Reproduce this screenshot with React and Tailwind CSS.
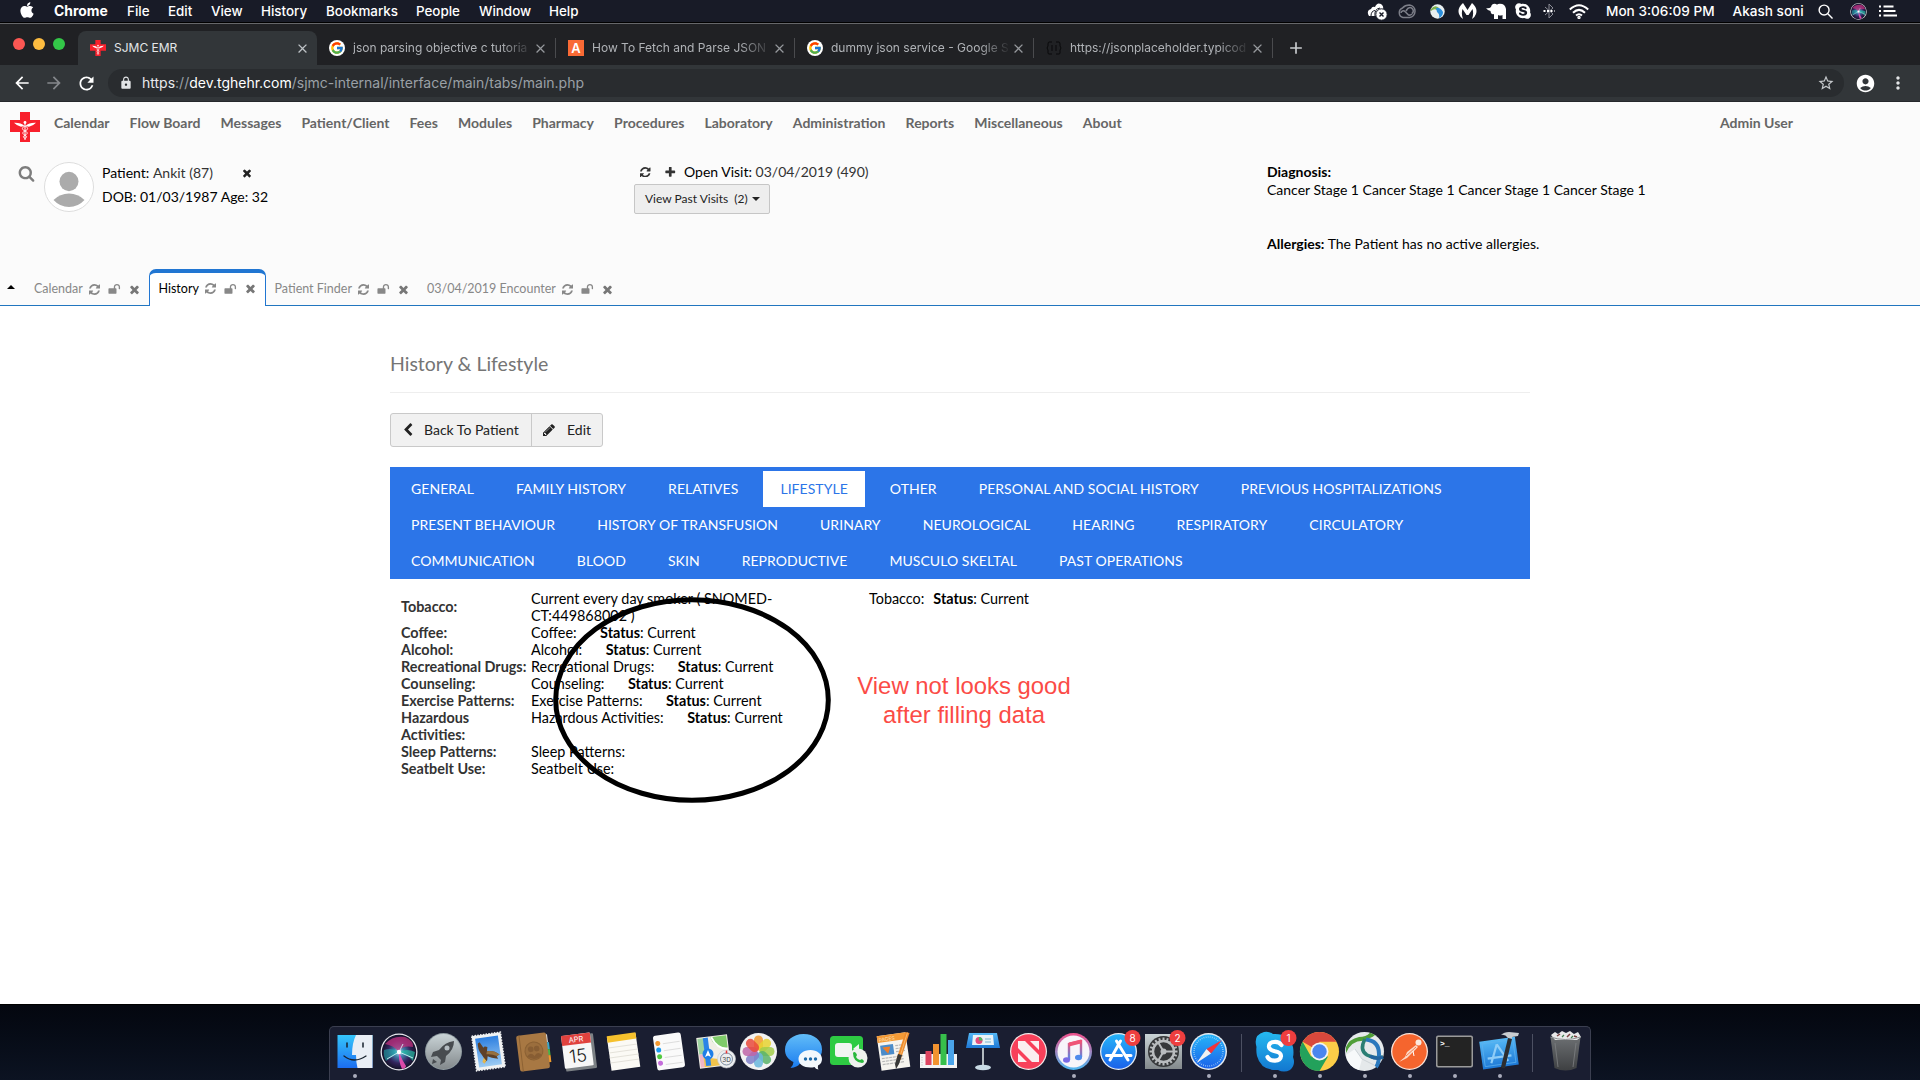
import React from "react";
import { FaApple, FaSkype } from "react-icons/fa";
import { FcGoogle } from "react-icons/fc";
import { MdAccountCircle, MdArrowBack, MdArrowForward, MdRefresh, MdLock, MdStarBorder, MdMoreVert, MdClose, MdAdd } from "react-icons/md";

const glyphs = {
  times: ["0 0 1792 1792", "M1490 1322q0 40-28 68l-136 136q-28 28-68 28t-68-28l-294-294-294 294q-28 28-68 28t-68-28l-136-136q-28-28-28-68t28-68l294-294-294-294q-28-28-28-68t28-68l136-136q28-28 68-28t68 28l294 294 294-294q28-28 68-28t68 28l136 136q28 28 28 68t-28 68l-294 294 294 294q28 28 28 68z"],
  refresh: ["0 0 1536 1536", "M1511 928q0 5-1 7-64 268-268 434.5t-478 166.5q-146 0-282.5-55t-243.5-157l-129 129q-19 19-45 19t-45-19-19-45v-448q0-26 19-45t45-19h448q26 0 45 19t19 45-19 45l-137 137q71 66 161 102t187 36q134 0 250-65t186-179q11-17 53-117 8-23 30-23h192q13 0 22.5 9.5t9.5 22.5zm25-800v448q0 26-19 45t-45 19h-448q-26 0-45-19t-19-45 19-45l138-138q-148-137-349-137-134 0-250 65t-186 179q-11 17-53 117-8 23-30 23h-199q-13 0-22.5-9.5t-9.5-22.5v-7q65-268 270-434.5t480-166.5q146 0 284 55.5t245 156.5l130-129q19-19 45-19t45 19 19 45z"],
  unlock: ["0 0 1792 1792", "M1728 576v256q0 26-19 45t-45 19h-64q-26 0-45-19t-19-45v-256q0-106-75-181t-181-75-181 75-75 181v192h96q40 0 68 28t28 68v576q0 40-28 68t-68 28h-960q-40 0-68-28t-28-68v-576q0-40 28-68t68-28h672v-192q0-185 131.5-316.5t316.5-131.5 316.5 131.5 131.5 316.5z"],
  plus: ["0 0 1792 1792", "M1600 736v192q0 40-28 68t-68 28h-416v416q0 40-28 68t-68 28h-192q-40 0-68-28t-28-68v-416h-416q-40 0-68-28t-28-68v-192q0-40 28-68t68-28h416v-416q0-40 28-68t68-28h192q40 0 68 28t28 68v416h416q40 0 68 28t28 68z"],
  search: ["0 128 1792 1792", "M1216 832q0-185-131.5-316.5t-316.5-131.5-316.5 131.5-131.5 316.5 131.5 316.5 316.5 131.5 316.5-131.5 131.5-316.5zm512 832q0 52-38 90t-90 38q-54 0-90-38l-343-342q-179 124-399 124-143 0-273.5-55.5t-225-150-150-225-55.5-273.5 55.5-273.5 150-225 225-150 273.5-55.5 273.5 55.5 225 150 150 225 55.5 273.5q0 220-124 399l343 343q37 37 37 90z"],
  pencil: ["0 0 1792 1792", "M491 1536l91-91-235-235-91 91v107h128v128h107zm523-928q0-22-22-22-10 0-17 7l-542 542q-7 7-7 17 0 22 22 22 10 0 17-7l542-542q7-7 7-17zm-54-192l416 416-832 832h-416v-416zm683 96q0 53-37 90l-166 166-416-416 166-165q36-38 90-38 53 0 91 38l235 234q37 39 37 91z"],
  back: ["0 0 1792 1792", "M1427 301l-531 531 531 531q19 19 19 45t-19 45l-166 166q-19 19-45 19t-45-19l-742-742q-19-19-19-45t19-45l742-742q19-19 45-19t45 19l166 166q19 19 19 45t-19 45z"],
};

function Glyph({ name, className }) {
  return (
    <svg viewBox={glyphs[name][0]} className={`shrink-0 fill-current ${className}`}>
      <path d={glyphs[name][1]} />
    </svg>
  );
}

function CrossLogo({ className }) {
  return (
    <svg viewBox="0 0 30 30" className={`shrink-0 ${className}`}>
      <path d="M10 0h10v8h10v12H20v10H10V20H0V8h10z" fill="#f8202c" />
      <path d="M15 10v18" stroke="#fff" strokeWidth="1" />
      <path d="M14.500 14Q11 10.500 4 10.800Q7 14 11 14.800ZM15.500 14Q19 10.500 26 10.800Q23 14 19 14.800Z" fill="#fff" />
      <path d="M15 14c-3.500 1.500-3.500 3.500 0 5s2.500 3 0 4.200-1.800 2.300 0 3.300M15 14c3.500 1.500 3.500 3.500 0 5s-2.500 3 0 4.200 1.800 2.300 0 3.300" stroke="#fff" strokeWidth=".9" fill="none" />
      <circle cx="15" cy="10.500" r="1.400" fill="#fff" />
    </svg>
  );
}

/* ---------- menu bar ---------- */
const SiriOrb = ({ className, id }) => (
  <svg viewBox="0 0 38 38" className={className}>
    <defs>
      <radialGradient id={`${id}a`} cx="50%" cy="50%" r="50%">
        <stop offset="0" stopColor="#b7e8f4" /><stop offset=".3" stopColor="#3f7fa8" /><stop offset=".65" stopColor="#33245e" /><stop offset="1" stopColor="#141228" />
      </radialGradient>
    </defs>
    <circle cx="19" cy="19" r="18.500" fill="#e8e8ee" />
    <circle cx="19" cy="19" r="17.200" fill={`url(#${id}a)`} />
    <path d="M5 11Q13 2 25 4Q34 8 33 14Q22 12 19 19Q13 12 5 11Z" fill="#c2307d" opacity=".75" />
    <path d="M4 17Q12 14 19 19Q12 24 6 28Q3 23 4 17Z" fill="#1fb7b0" opacity=".55" />
    <path d="M35 19Q27 15 19 19Q28 22 33 28Z" fill="#25c8a8" opacity=".65" />
    <path d="M19 19Q18 27 22 36Q26 35 26 33Q22 27 19 19Z" fill="#f04fb4" opacity=".9" />
    <path d="M19 19L7 26M19 19L33 25M19 19L23 11" stroke="#d5f7fb" strokeWidth="1" opacity=".85" />
    <circle cx="19" cy="19" r="2.200" fill="#fff" />
  </svg>
);

function MenuBar() {
  return (
    <header className="flex h-[23px] items-center border-b border-black bg-[#181b27] font-['Inter',sans-serif] text-[13.4px] font-medium text-white">
      <FaApple className="mb-[3px] ml-[19px] h-[18px] w-[16px]" />
      <nav className="ml-[19px] flex items-center whitespace-nowrap">
        <span className="w-[73px] text-[13.9px] font-bold">Chrome</span>
        <span className="w-[41px]">File</span>
        <span className="w-[43px]">Edit</span>
        <span className="w-[50px]">View</span>
        <span className="w-[65px]">History</span>
        <span className="w-[90px]">Bookmarks</span>
        <span className="w-[63px]">People</span>
        <span className="w-[70px]">Window</span>
        <span>Help</span>
      </nav>
      <div className="ml-auto flex h-full items-center pr-[23px]">
        <span className="flex w-[31px] justify-center">
          <svg viewBox="0 0 21 19" className="h-[19px] w-[21px]">
            <path d="M1 12Q0 8 4 7Q5 4 8 5Q10 0 14 2Q17 4 16 8L10 14H2Z" fill="#fff" />
            <path d="M4 14Q4 9 8 8.500M8 14Q7 7 13 6" stroke="#181b27" fill="none" />
            <circle cx="14.500" cy="12.500" r="5.700" fill="#fff" stroke="#181b27" strokeWidth="1" />
            <path d="M12.500 10.500l4 4m0-4l-4 4" stroke="#181b27" strokeWidth="1.400" />
          </svg>
        </span>
        <span className="flex w-[27px] justify-center">
          <svg viewBox="0 0 20 15" className="h-[15px] w-[20px]" fill="none" stroke="#7c7e88">
            <path d="M6 13.500a5 5 0 0 1-.5-9.500Q8 1 12.500 1a6.300 6.300 0 0 1 0 12.500Z" strokeWidth="1.500" />
            <path d="M15 9.500a3.300 3.300 0 1 0-5-4l-1 1.500M4 9a2.300 2.300 0 0 1 4-1.500l3.500 3.500q2 .5 3.500-1" strokeWidth="1.600" />
          </svg>
        </span>
        <span className="flex w-[34px] justify-center">
          <svg viewBox="0 0 15 15" className="size-[15px]">
            <circle cx="7.500" cy="7.500" r="7.200" fill="#e9eff0" />
            <path d="M1 5Q5 0 9 4L7 6Q4 4 1 7Z" fill="#7fb24d" />
            <path d="M6 4Q10 3 13 8Q13 12 9 14Q10 10 7 8Z" fill="#2c8fdc" />
          </svg>
        </span>
        <span className="flex w-[27px] justify-center">
          <svg viewBox="0 0 19 16" className="h-[16px] w-[19px]">
            <path d="M5 0L9.500 7L14 0Q20 5 18 11Q17 14 14 16Q16 11 14.500 6L10.500 12H8.500L4.500 6Q3 11 5 16Q2 14 1 11Q-1 5 5 0Z" fill="#fff" />
          </svg>
        </span>
        <span className="flex w-[31px] justify-center">
          <svg viewBox="0 0 21 16" className="h-[16px] w-[21px]">
            <path d="M0 5Q3 6 5 4Q6 0 10 1Q11 2 12 1Q19 0 20 6V16H16.500V12Q14 13 12 12V16H8V11Q5 12 4.500 8Q2 8 0 5Z" fill="#fff" />
          </svg>
        </span>
        <span className="flex w-[22px] justify-center"><FaSkype className="size-[18px]" /></span>
        <span className="flex w-[29px] justify-center text-[#8b8d96]">
          <svg viewBox="0 0 12 16" className="h-[16px] w-[12px]" fill="none" stroke="currentColor">
            <path d="M2 4l8 7-4 4V1l4 4-8 7" />
            <path d="M.500 8h11" stroke="#fff" strokeWidth="2" strokeDasharray="2 1.500" />
          </svg>
        </span>
        <span className="flex w-[31px] justify-center">
          <svg viewBox="0 0 20 15" className="h-[15px] w-[20px]" fill="none" stroke="#fff" strokeWidth="2">
            <path d="M.800 5.500Q10-3 19.200 5.500M4 8.700Q10 3 16 8.700M7 11.500Q10 9 13 11.500" />
            <circle cx="10" cy="13.400" r=".7" />
          </svg>
        </span>
        <span className="ml-[12px] w-[126.5px] whitespace-nowrap text-[13.6px]">Mon 3:06:09 PM</span>
        <span className="w-[85.5px] whitespace-nowrap text-[13.6px]">Akash soni</span>
        <svg viewBox="0 0 16 16" className="size-[15px]" fill="none" stroke="#fff" strokeWidth="1.500"><circle cx="6.500" cy="6.500" r="5.300" /><path d="M10.500 10.500l5 5" /></svg>
        <SiriOrb id="menuSiri" className="ml-[17px] size-[17px]" />
        <svg viewBox="0 0 18 12" className="ml-[12px] h-[12px] w-[18px]" fill="none" stroke="#fff" strokeWidth="2"><path d="M0 1.500h2M4.500 1.500h10M0 6h2M4.500 6h12M0 10.500h2M4.500 10.500h13.500" /></svg>
      </div>
    </header>
  );
}

/* ---------- browser chrome ---------- */
function Favicon({ kind }) {
  if (kind === "emr") return <CrossLogo className="size-[16px]" />;
  if (kind === "google")
    return (
      <span className="flex size-[16px] shrink-0 items-center justify-center rounded-full bg-white">
        <FcGoogle className="size-[14px]" />
      </span>
    );
  if (kind === "app")
    return <span className="flex size-[16px] shrink-0 items-center justify-center bg-[#f96a35] text-[13px] leading-[16px] font-semibold text-white">A</span>;
  return (
    <svg viewBox="0 0 16 16" className="size-[16px] shrink-0" fill="none" stroke="#08090a"><path d="M6 2H3q-1 0-1 2v2l-1 2 1 2v3q0 1 1 1h3M10 2h3q1 0 1 2v2l1 2-1 2v3q0 1-1 1h-3M6 5v6M10 5v6" /></svg>
  );
}

const tabs = [
  { kind: "google", title: "json parsing objective c tutoria" },
  { kind: "app", title: "How To Fetch and Parse JSON" },
  { kind: "google", title: "dummy json service - Google S" },
  { kind: "json", title: "https://jsonplaceholder.typicod" },
];

function TabStrip() {
  return (
    <div className="flex h-[42px] border-t border-[#66676a] bg-[#202124] pl-[13px] font-['Inter',sans-serif] text-[12px]">
      <div className="flex w-[65px] items-start gap-[8px] pt-[14px]">
        <span className="size-[12px] rounded-full bg-[#fc5753]" />
        <span className="size-[12px] rounded-full bg-[#fdbc40]" />
        <span className="size-[12px] rounded-full bg-[#33c748]" />
      </div>
      <div className="mt-[7px] flex w-[239px] items-center rounded-t-[8px] bg-[#323639] pr-[7px] pl-[12px] text-[#e4e6e8]">
        <Favicon kind="emr" />
        <span className="ml-[8px] flex-1 text-[12px]">SJMC EMR</span>
        <MdClose className="size-[15px] text-[#bfc3c7]" />
      </div>
      {tabs.map((t) => (
        <div key={t.title} className="mt-[14px] mb-[7px] flex w-[239px] items-center border-r border-[#4a4b4e] pr-[7px] pl-[12px] text-[#b0b3b7]">
          <Favicon kind={t.kind} />
          <span className="ml-[8px] w-[180px] whitespace-nowrap [mask-image:linear-gradient(to_right,black_148px,transparent_180px)]">{t.title}</span>
          <MdClose className="size-[15px] shrink-0 text-[#96999d]" />
        </div>
      ))}
      <MdAdd className="mt-[14px] ml-[13px] size-[20px] text-[#c8cbce]" />
    </div>
  );
}

function Toolbar() {
  return (
    <div className="flex h-[37px] items-center border-b border-[#25282b] bg-[#323639] pl-[12px] text-white">
      <MdArrowBack className="size-[20px]" />
      <MdArrowForward className="ml-[12px] size-[20px] text-[#85888c]" />
      <MdRefresh className="ml-[12px] size-[21px]" />
      <div className="ml-[11px] flex h-[28px] w-[1736px] items-center rounded-full bg-[#292c2f] pr-[9px] pl-[11px]">
        <MdLock className="size-[14px] text-[#e2e4e6]" />
        <p className="mb-[2px] ml-[9px] flex-1 font-['Inter',sans-serif] text-[14px] text-[#9aa0a6]">
          <span className="text-[#e8eaed]">https</span>://<span className="text-white">dev.tghehr.com</span>/sjmc-internal/interface/main/tabs/main.php
        </p>
        <MdStarBorder className="size-[18px] text-[#c6c9cc]" />
      </div>
      <MdAccountCircle className="ml-[11px] size-[21px]" />
      <MdMoreVert className="ml-[12px] size-[20px] text-[#e4e6e8]" />
    </div>
  );
}

/* ---------- EMR page ---------- */
const mainMenu = ["Calendar", "Flow Board", "Messages", "Patient/Client", "Fees", "Modules", "Pharmacy", "Procedures", "Laboratory", "Administration", "Reports", "Miscellaneous", "About"];

function EmrTab({ label, active, className }) {
  return (
    <div className={`flex items-center text-[12.5px] ${active ? "h-[37px] rounded-t-[7px] border-x border-t-4 border-[#2176d2] bg-white pb-px text-black" : "h-[36px] pt-[5px] text-[#888]"} ${className}`}>
      <span className="whitespace-nowrap">{label}</span>
      <Glyph name="refresh" className="ml-[6.5px] size-[11px] text-[#888]" />
      <Glyph name="unlock" className="ml-[8px] size-[12.5px] text-[#888]" />
      <Glyph name="times" className="ml-[7px] size-[13px] text-[#777]" />
    </div>
  );
}

function EmrHeader() {
  return (
    <section className="flex h-[204px] flex-col border-b border-[#2176bf] bg-[#fbfbfb]">
      <div className="flex h-[50px] items-start">
        <CrossLogo className="mt-[10px] ml-[10px] size-[30px]" />
        <nav className="mt-[10.5px] ml-[14px] flex flex-1 gap-[20.1px] text-[14px] leading-[20px] font-bold text-[#666]">
          {mainMenu.map((m) => <span key={m}>{m}</span>)}
        </nav>
        <span className="mt-[10.5px] w-[200px] text-[14px] leading-[20px] font-bold text-[#666]">Admin User</span>
      </div>
      <div className="flex h-[104px] items-start pl-[18px] text-[14px]">
        <Glyph name="search" className="mt-[14px] size-[17px] text-[#7d7d7d]" />
        <svg viewBox="0 0 50 50" className="mt-[10px] ml-[9px] size-[50px]">
          <circle cx="25" cy="25" r="24.500" fill="#fff" stroke="#ddd" />
          <ellipse cx="25" cy="19.500" rx="9.500" ry="9.700" fill="#ababab" />
          <path d="M9.500 38Q16 31.500 25 31.500T40.500 38Q34 45 25 45T9.500 38Z" fill="#ababab" />
        </svg>
        <div className="mt-[9px] ml-[8px] w-[532px] leading-[24px]">
          <p className="flex items-center whitespace-pre">Patient: <span className="text-[#333]">Ankit (87)</span><Glyph name="times" className="ml-[28px] size-[12px] text-[#222]" /></p>
          <p>DOB: 01/03/1987 Age: 32</p>
        </div>
        <div className="mt-[10px] w-[633px]">
          <p className="flex items-center leading-[20px] whitespace-pre">
            <Glyph name="refresh" className="ml-[6px] size-[10.500px] text-[#333]" />
            <Glyph name="plus" className="mr-[8px] ml-[13px] size-[12.5px] text-[#333]" />
            Open Visit: <span className="text-[#333]">03/04/2019 (490)</span>
          </p>
          <div className="mt-[2px] flex h-[30px] w-[136px] items-center rounded-[2px] border border-[#c6c6c6] bg-[#eee] pl-[10px] text-[12px] whitespace-pre text-[#222]">
            View Past Visits  (2)<span className="mt-px ml-[4px] border-x-4 border-t-4 border-x-transparent border-t-[#222]" />
          </div>
        </div>
        <div className="mt-[11px] leading-[18px]">
          <p className="font-bold">Diagnosis:</p>
          <p>Cancer Stage 1 Cancer Stage 1 Cancer Stage 1 Cancer Stage 1</p>
          <p className="mt-[36px]"><b>Allergies:</b> The Patient has no active allergies.</p>
        </div>
      </div>
      <div className="flex h-[50px] items-end">
        <span className="mr-[10px] mb-[16px] ml-[7px] h-0 w-0 border-x-4 border-b-4 border-x-transparent border-b-black" />
        <EmrTab label="Calendar" className="w-[124px] pl-[9px]" />
        <EmrTab label="History" active className="mb-[-1px] w-[117px] pl-[8.5px]" />
        <EmrTab label="Patient Finder" className="w-[152px] pl-[8.5px]" />
        <EmrTab label="03/04/2019 Encounter" className="pl-[9px]" />
      </div>
    </section>
  );
}

const sections = [
  ["GENERAL", "FAMILY HISTORY", "RELATIVES", "LIFESTYLE", "OTHER", "PERSONAL AND SOCIAL HISTORY", "PREVIOUS HOSPITALIZATIONS"],
  ["PRESENT BEHAVIOUR", "HISTORY OF TRANSFUSION", "URINARY", "NEUROLOGICAL", "HEARING", "RESPIRATORY", "CIRCULATORY"],
  ["COMMUNICATION", "BLOOD", "SKIN", "REPRODUCTIVE", "MUSCULO SKELTAL", "PAST OPERATIONS"],
];

const rows = [
  ["Coffee:", true], ["Alcohol:", true], ["Recreational Drugs:", true], ["Counseling:", true], ["Exercise Patterns:", true],
  ["Hazardous Activities:", true], ["Sleep Patterns:", false], ["Seatbelt Use:", false],
];

function History() {
  return (
    <main className="relative h-[698px] bg-white pl-[390px]">
      <div className="w-[1140px]">
        <h1 className="flex h-[87px] items-end border-b border-[#eee] pb-[16px] text-[19.5px] leading-[24px] text-[#757575]">History &amp; Lifestyle</h1>
        <div className="mt-[20px] flex h-[34px] w-[213px] overflow-hidden rounded-[3px] border border-[#c9c9c9] bg-[#f1f1f1] text-[14px] text-[#222]">
          <span className="flex w-[141px] items-center border-r border-[#c9c9c9] pb-[2px] pl-[10px]"><Glyph name="back" className="mt-px mr-[9px] size-[14px]" />Back To Patient</span>
          <span className="flex items-center pb-[2px] pl-[10px]"><Glyph name="pencil" className="mt-px mr-[11px] size-[14px]" />Edit</span>
        </div>
        <div className="mt-[20px] h-[112px] bg-[#2c75e8] pt-[4px] text-[14px] tracking-[0.05px] text-white">
          {sections.map((line, i) => (
            <div key={i} className="flex h-[36px]">
              {line.map((s) => (
                <span key={s} className={`mx-[3.500px] flex items-center px-[17.500px] pb-[2px] ${s === "LIFESTYLE" ? "bg-white text-[#2c75e8]" : ""}`}>{s}</span>
              ))}
            </div>
          ))}
        </div>
        <div className="mt-[11px] ml-[11px] grid w-[1100px] grid-cols-[130px_338px_1fr] text-[14.400px] leading-[17px] text-black">
          <b className="self-center pb-px text-[#333]">Tobacco:</b>
          <span className="w-[260px]">Current every day smoker ( SNOMED-CT:449868002 )</span>
          <span>Tobacco:<b className="ml-[9px]">Status</b>: Current</span>
          {rows.map(([label, status]) => (
            <React.Fragment key={label}>
              <b className={`text-[#333] ${label.startsWith("Haz") ? "w-[100px]" : "whitespace-nowrap"}`}>{label}</b>
              <span className="col-span-2">{label}{status && <><b className="ml-[23.5px]">Status</b>: Current</>}</span>
            </React.Fragment>
          ))}
        </div>
      </div>
      <svg viewBox="0 0 278 206" className="absolute top-[291px] left-[553px] h-[206px] w-[278px]" fill="none" stroke="#000" strokeWidth="5"><ellipse cx="139" cy="103" rx="136.300" ry="100.300" /></svg>
      <p className="absolute top-[365px] left-[844px] w-[240px] text-center font-['Liberation_Sans',sans-serif] text-[23.900px] leading-[29px] text-[#fb4b46]">View not looks good<br />after filling data</p>
    </main>
  );
}

/* ---------- dock ---------- */
const Badge = ({ n }) => (
  <g>
    <circle cx="36.500" cy="9" r="8" fill="#ee3e3f" />
    <text x="36.500" y="12.500" textAnchor="middle" fontSize="10" fill="#fff" className="font-['Inter',sans-serif]">{n}</text>
  </g>
);

const petals = ["#f59a2f", "#e8d431", "#a3ce4a", "#5bb36a", "#6bb7dd", "#7f7fc9", "#c065a8", "#ea4a3c"];
const gearTeeth = Array.from({ length: 20 }, (_, i) => i * 18);

const dockIcons = {
  finder: (
    <>
      <rect x="5.500" y="6" width="35" height="33" fill="url(#gFinder)" />
      <path d="M24 6h16.500v33H25.500Q24 33 24 26h-4Q20 14 24 6Z" fill="#e9eef5" />
      <path d="M15 14v4M31 14v4" stroke="#16202c" strokeWidth="1.500" strokeLinecap="round" />
      <path d="M12 27Q22 35 34 27" stroke="#16202c" strokeWidth="1.300" fill="none" strokeLinecap="round" />
    </>
  ),
  rocket: (
    <>
      <circle cx="22.500" cy="22.500" r="18.500" fill="#8f9ba0" /><circle cx="22.500" cy="22.500" r="17.500" fill="url(#gSilver)" />
      <path d="M33 12Q24 13 18 21L12 23L10 28L16 27L20 31L19 36L24 33L25 27Q33 21 33 12ZM12 30L11 35L16 33Z" fill="#484c50" />
      <circle cx="26" cy="19" r="2.500" fill="#b5bdc2" />
    </>
  ),
  mail: (
    <g transform="rotate(-8 22.500 22.500)">
      <rect x="8" y="5" width="29" height="35" fill="#f0f2f3" stroke="#f0f2f3" strokeWidth="1.500" strokeDasharray="1.500 1.300" />
      <rect x="11" y="8" width="23" height="29" fill="url(#gSky)" />
      <path d="M13 13L15 12L18 18Q19 16 22 18L21 22Q28 22 33 27L30 28L31 31Q24 29 21 27L20 31L17 33V28L15 24Q12 19 13 13Z" fill="#5e4028" /><path d="M21 22Q28 22 33 27L30 28Q25 25 20 25Z" fill="#96703f" /><path d="M17 28l2 3-2 3-2-2z" fill="#e5b74c" />
    </g>
  ),
  contacts: (
    <g transform="rotate(-7 22.500 22.500)">
      <path d="M36 7h2v8h-2z" fill="#ddd" /><path d="M36 15h3v7h-3z" fill="#3aa7c9" /><path d="M36 22h3v6h-3z" fill="#48b34a" /><path d="M36 28h3v7h-3z" fill="#ee9b2d" />
      <rect x="7" y="5" width="30" height="36" rx="2" fill="#a87843" /><path d="M10 5v36" stroke="#8d6234" />
      <circle cx="23" cy="22" r="9" fill="#9b6e3d" stroke="#8a6033" /><circle cx="20" cy="20" r="2.800" fill="#875d33" /><circle cx="26" cy="20" r="2.800" fill="#875d33" /><path d="M15.500 27q4-5 7.500 0q3.500-5 7.500 0-7 6-15 0z" fill="#875d33" />
    </g>
  ),
  calendar: (
    <g transform="rotate(-7 22.500 22.500)">
      <rect x="8" y="6" width="31" height="35" rx="1" fill="#7c8185" />
      <rect x="7" y="5" width="29" height="33" rx="1" fill="#f7f7f7" /><rect x="7" y="5" width="29" height="10" fill="#e0423e" />
      <text x="21.500" y="12.800" textAnchor="middle" fontSize="7.500" fill="#fff" className="font-['Inter',sans-serif]">APR</text>
      <text x="21.500" y="33" textAnchor="middle" fontSize="18" fill="#222" className="font-['Inter',sans-serif] font-light">15</text>
    </g>
  ),
  notes: (
    <g transform="rotate(-8 22.500 22.500)">
      <rect x="8" y="6" width="29" height="34" fill="#fbfaf5" /><rect x="8" y="5" width="29" height="6.500" fill="#f6c12d" />
      <path d="M8 17h29M8 22h29M8 27h29M8 32h29" stroke="#e4e2da" />
    </g>
  ),
  reminders: (
    <g transform="rotate(-8 22.500 22.500)">
      <rect x="9" y="5" width="28" height="35" rx="2.500" fill="#fafafa" />
      <circle cx="13" cy="13" r="2.500" fill="#f59a30" /><circle cx="13" cy="19.700" r="2.500" fill="#1c9bf0" /><circle cx="13" cy="26.400" r="2.500" fill="#52c93f" /><circle cx="13" cy="33" r="2.500" fill="#c56edb" />
      <path d="M18 14h17M18 21h17M18 28h17M18 35h17" stroke="#ddd" />
    </g>
  ),
  maps: (
    <>
      <g transform="rotate(-7 22.500 22.500)">
        <rect x="7" y="7" width="31" height="31" fill="#f1eee6" />
        <path d="M21 8h16v12Q24 20 21 8Z" fill="#7fcb6a" /><path d="M8 8h6v16H8z" fill="#9dd3a0" /><path d="M8 24h5v13H8z" fill="#f1b5c6" /><path d="M12 27l25 6v4H12z" fill="#f3c44a" />
        <path d="M16 8v28" stroke="#2c84e6" strokeWidth="5" /><path d="M22 8Q26 20 37 22" stroke="#fff" strokeWidth="2" fill="none" />
      </g>
      <circle cx="17" cy="25" r="5.500" fill="#1f7fe8" /><path d="M17 21l3 7-3-1.500-3 1.500z" fill="#fff" />
      <circle cx="35.500" cy="30" r="9" fill="#eceef0" stroke="#c8cbd0" strokeWidth=".6" /><circle cx="35.500" cy="30" r="6" fill="none" stroke="#7d8b9e" /><path d="M35.500 21.500v3" stroke="#e33" strokeWidth="1.500" />
      <text x="35.500" y="32.500" textAnchor="middle" fontSize="6.500" fill="#444" className="font-['Inter',sans-serif]">3D</text>
    </>
  ),
  photos: (
    <>
      <circle cx="22.500" cy="22.500" r="18.500" fill="#f2f2f2" />
      {petals.map((c, i) => <rect key={c} x="18" y="6.500" width="9" height="15" rx="4.500" fill={c} opacity=".85" transform={`rotate(${i * 45} 22.500 22.500)`} />)}
    </>
  ),
  messages: (
    <>
      <path d="M22.500 5C12 5 4 12 4 20.500c0 6 3 10 8.500 12.500q0 3-3 6 7-1 9-4C33 36 41 30 41 20.500S33 5 22.500 5Z" fill="url(#gMsg)" />
      <path d="M29.500 21c-7 0-12 4-12 9s5 8.500 12 8.500q2 0 4-.5 1 2 4 2.500-1-2-.5-4c3-1.500 4-4 4-6.500 0-5-5-9-11.500-9Z" fill="#f3f8fc" />
      <circle cx="24.500" cy="30" r="1.700" fill="#1d6aa8" /><circle cx="29.500" cy="30" r="1.700" fill="#1d6aa8" /><circle cx="34.500" cy="30" r="1.700" fill="#1d6aa8" />
    </>
  ),
  facetime: (
    <>
      <rect x="4" y="7" width="33" height="29" rx="3.500" fill="#2ecb43" /><rect x="9" y="14" width="17" height="14" rx="3" fill="#f2f5f2" /><path d="M27 20l6-5v8z" fill="#f2f5f2" />
      <circle cx="32" cy="29" r="9.500" fill="#eef1ee" /><path d="M27 24q1-2 3 0l1 2-1 2q2 3 4 3l2-1 2 2q0 2-2 2Q27 33 27 24Z" fill="#29b83c" />
    </>
  ),
  pages: (
    <>
      <g transform="rotate(-8 22.500 22.500)">
        <rect x="8" y="5" width="29" height="35" fill="#f6f4ef" /><rect x="8" y="5" width="29" height="7" fill="#f39a36" />
        <text x="9.500" y="11" fontSize="5" fill="#fbe1bd" className="font-['Inter',sans-serif]">PAGES</text>
        <rect x="10" y="15" width="13" height="10" fill="#4b8cca" /><path d="M12 17h8l-3 7z" fill="#ee7d28" />
        <path d="M25 17h9M25 20h9M25 23h9M10 28h22M10 31h22M10 34h22" stroke="#b8b8b8" strokeWidth="1.200" strokeDasharray="3 .7" />
      </g>
      <path d="M34.500 3l4 1-9 27-4-1z" fill="#ef8c2b" /><path d="M36.500 3.500l-8.500 27" stroke="#f9c27e" strokeWidth=".8" /><path d="M27 25l4 1-3 9-3 5-1-5z" fill="#373737" />
    </>
  ),
  numbers: (
    <>
      <path d="M4 25h37v14H4z" fill="#f3f3f3" /><path d="M6 28v9" stroke="#bbb" strokeDasharray="1 1.500" />
      <rect x="9.500" y="22" width="6" height="14" fill="#dd4561" /><rect x="17" y="15" width="6" height="21" fill="#f29330" /><rect x="24.500" y="5" width="6" height="31" fill="#37bf4b" /><rect x="32" y="11" width="6" height="25" fill="#4aa4ea" />
    </>
  ),
  keynote: (
    <>
      <path d="M8 4h28l3 15H5z" fill="url(#gKey)" /><path d="M12 6h20l1 10H11z" fill="#eaf3f7" /><circle cx="18" cy="11.500" r="3.500" fill="#e24d7d" /><path d="M18 11.500V8a3.500 3.500 0 0 1 3.500 3.500z" fill="#4ab95b" /><path d="M24 10h6M24 13h6" stroke="#7ab4d0" />
      <path d="M22 19v18" stroke="#c6ccd1" strokeWidth="1.800" /><ellipse cx="22" cy="38.500" rx="8" ry="2.800" fill="#c9dbe5" />
    </>
  ),
  news: (
    <>
      <circle cx="22.500" cy="22.500" r="18.500" fill="#f3e9ea" /><circle cx="22.500" cy="22.500" r="17.300" fill="#f8405a" />
      <path d="M12 12h7l14 14v7h-7L12 19zM24 12h9v9zM12 24v9h9z" fill="#fbeff0" />
    </>
  ),
  itunes: (
    <>
      <circle cx="22.500" cy="22.500" r="18.500" fill="url(#gTunes)" /><circle cx="22.500" cy="22.500" r="16" fill="#f7f5fa" />
      <path d="M18 31V15l12-3v16" fill="none" stroke="url(#gNote)" strokeWidth="2.400" /><path d="M18 13.500l12-3v4l-12 3z" fill="#ef5577" /><ellipse cx="15.500" cy="31" rx="3.500" ry="2.800" fill="#7a6be6" /><ellipse cx="27.500" cy="28.500" rx="3.500" ry="2.800" fill="#4f8bec" />
    </>
  ),
  appstore: (
    <>
      <circle cx="22.500" cy="22.500" r="18.500" fill="#e5ecf4" /><circle cx="22.500" cy="22.500" r="17.200" fill="url(#gStore)" />
      <path d="M24.500 12L14 31M20.500 12L32 31M10.500 26.500h15M30 26.500h5" stroke="#fff" strokeWidth="3" strokeLinecap="round" />
      <Badge n="8" />
    </>
  ),
  settings: (
    <>
      <rect x="4" y="5" width="37" height="35" fill="url(#gSilver)" />
      <circle cx="22.500" cy="22.500" r="15.500" fill="#36383a" />
      {gearTeeth.map((a) => <path key={a} d="M21.500 8.500h2v3h-2z" fill="#b9bcbe" transform={`rotate(${a} 22.500 22.500)`} />)}
      <circle cx="22.500" cy="22.500" r="10.500" fill="none" stroke="#b9bcbe" strokeWidth="2.400" />
      <path d="M22.500 22.500L33 22.500M22.500 22.500l-5.500-9.500M22.500 22.500l-5.500 9.500" stroke="#b9bcbe" strokeWidth="2" /><circle cx="22.500" cy="22.500" r="3" fill="#b9bcbe" />
      <Badge n="2" />
    </>
  ),
  safari: (
    <>
      <circle cx="22.500" cy="22.500" r="18.500" fill="#e4eaf0" /><circle cx="22.500" cy="22.500" r="17" fill="url(#gStore)" />
      <circle cx="22.500" cy="22.500" r="14.500" fill="none" stroke="#bfe4fa" strokeWidth="1.500" strokeDasharray=".6 1.500" />
      <path d="M36 11L20.500 20l4.500 4.500z" fill="#f2343a" /><path d="M10.500 34L20.500 20l4.500 4.500z" fill="#f1f1f1" />
    </>
  ),
  skype: (
    <>
      <path d="M12 3Q17 2 21 5Q37 4 41 18Q42 24 41 28Q44 36 38 41Q32 44 26 41Q9 42 5 27Q4 22 4.500 18Q1 6 12 3Z" fill="url(#gSkype)" />
      <path d="M29.500 16Q27 12.500 22 13Q16.500 13.500 17 18Q17.500 21 23 22.300Q29 23.500 29 27Q28.500 31.500 23 31.700Q17.500 31.800 15.500 28" fill="none" stroke="#fff" strokeWidth="4.200" strokeLinecap="round" />
      <Badge n="1" />
    </>
  ),
  chrome: (
    <>
      <circle cx="22.500" cy="22.500" r="19.500" fill="#fccd48" />
      <path d="M22.500 22.500L5.600 12.700A19.500 19.500 0 0 1 39.400 12.700H22.500Z" fill="#d8483c" />
      <path d="M5.600 12.700A19.500 19.500 0 0 0 22.500 42L31 27.500L14 27.500Z" fill="#23a15b" />
      <circle cx="22.500" cy="22.500" r="9" fill="#f4f4f4" /><circle cx="22.500" cy="22.500" r="7.200" fill="#4a86ee" />
    </>
  ),
  webex: (
    <>
      <circle cx="22.500" cy="22.500" r="19.500" fill="#e5e9eb" />
      <path d="M4 26L13 20L20 30L17 41Q6 38 4 26Z" fill="#f7f9fa" /><path d="M13 20L20 30L32 36" stroke="#cdd4d8" fill="none" />
      <path d="M4 24Q10 10 24 12L28 9Q31 8 33 6L28 3.700Q24 8 17 8Q7 10 4 18Z" fill="#4f9e38" />
      <path d="M23 10Q17 21 25 26Q32 30 41 28" fill="none" stroke="#2a7e73" strokeWidth="3.500" /><path d="M24 10.500Q37 12 37 25Q37 35 34 38" fill="none" stroke="#2a78bd" strokeWidth="4" />
      <path d="M28 27Q35 31 41 28" fill="none" stroke="#22649f" strokeWidth="3.500" />
    </>
  ),
  postman: (
    <>
      <circle cx="22.500" cy="22.500" r="18.500" fill="#fbe3d8" /><circle cx="22.500" cy="22.500" r="17.200" fill="#f5652e" />
      <circle cx="31.500" cy="13.500" r="3" fill="#fbe9df" /><path d="M29 16L20 23L18 28L12 33L20 29L31 18Z" fill="#fbd9c8" /><path d="M29 18L19 27M31 19L23 27" stroke="#f5652e" strokeWidth=".8" /><path d="M26 22l1 5" stroke="#fff" />
    </>
  ),
  terminal: (
    <>
      <rect x="4" y="6.500" width="37" height="32" rx="2" fill="#9b9b9b" /><rect x="5.500" y="8" width="34" height="29" rx="1" fill="#232323" />
      <text x="8" y="17" fontSize="8" fill="#fff" className="font-['Liberation_Mono',monospace] font-bold">&gt;_</text>
    </>
  ),
  xcode: (
    <>
      <g transform="rotate(-8 22.500 24)">
        <rect x="4" y="10" width="36" height="28" fill="url(#gKey)" /><path d="M21 15L13 33M21 15l9 18M10 28h24" stroke="#8fcdf7" fill="none" strokeWidth="2.200" /><rect x="6.500" y="12.500" width="31" height="23" fill="none" stroke="#5fb2ee" strokeWidth=".7" />
      </g>
      <path d="M24 6Q27 3 32 3L42 4L41 7L35 8V10L31 9Q28 5 24 6Z" fill="#c9cdd0" /><path d="M31 9l4 1-7 29q-2 1-4-1z" fill="#2c2d2f" />
    </>
  ),
  trash: (
    <>
      <path d="M7.500 8h30l-4 31q-11 5-22 0z" fill="url(#gTrash)" />
      <path d="M12 14l3 24M33 14l-3 24" stroke="#7d8083" strokeWidth=".8" />
      <path d="M8 6l4-3 3 2 4-3 4 2 4-2 4 3 4-2 3 5-4 3H12z" fill="#e8e9ea" /><path d="M14 7l3-2M24 8l3-3M31 7l3 1" stroke="#7b4040" strokeWidth="1.500" /><path d="M19 8l2-2M28 9l2-2" stroke="#3f7f4f" strokeWidth="1.200" />
      <path d="M7.500 8Q22 13 37.500 8" fill="none" stroke="#8d9093" />
    </>
  ),
};

const dockOrder = ["finder", "siri", "rocket", "mail", "contacts", "calendar", "notes", "reminders", "maps", "photos", "messages", "facetime", "pages", "numbers", "keynote", "news", "itunes", "appstore", "settings", "safari", "|", "skype", "chrome", "webex", "postman", "terminal", "xcode", "|", "trash"];
const running = ["finder", "itunes", "safari", "skype", "chrome", "webex", "postman", "terminal", "xcode"];

const gradients = [
  ["gFinder", "#35c6fb", "#1c6df0"], ["gSilver", "#c9d3d6", "#83898c"], ["gSky", "#2d7fe0", "#9ccbf3"], ["gMsg", "#62bdf8", "#1a7cf0"], ["gKey", "#55b8f5", "#1d78d6"],
  ["gTunes", "#f0518c", "#4fb9f3"], ["gNote", "#ef5577", "#4f8bec"], ["gStore", "#25b4f8", "#1b62ea"], ["gSkype", "#25b9f0", "#1277d0"], ["gTrash", "#6c6f72", "#3e4042"],
];

function Dock() {
  return (
    <footer className="flex h-[76px] items-end border-t border-black bg-linear-to-b from-[#04070f] to-[#0c1322] pl-[329px]">
      <svg className="h-0 w-0">
        <defs>
          {gradients.map(([id, a, b]) => (
            <linearGradient key={id} id={id} x1="0" y1="0" x2="0" y2="1"><stop offset="0" stopColor={a} /><stop offset="1" stopColor={b} /></linearGradient>
          ))}
        </defs>
      </svg>
      <div className="flex h-[54px] w-[1262px] rounded-t-[5px] border border-b-0 border-[#3b3f50] bg-[#1a1e31] px-[2px] pt-[2px]">
        {dockOrder.map((name, i) =>
          name === "|" ? (
            <span key={i} className="mt-[5px] flex w-[21px] justify-center"><i className="h-[38px] w-px bg-[#4c5062]" /></span>
          ) : (
            <span key={name} className="flex w-[45px] flex-col items-center">
              {name === "siri" ? <SiriOrb id="dockSiri" className="my-[3.500px] size-[38px]" /> : <svg viewBox="0 0 45 45" className="size-[45px]">{dockIcons[name]}</svg>}
              {running.includes(name) && <i className="size-[4px] rounded-full bg-[#a9acbb]" />}
            </span>
          )
        )}
      </div>
    </footer>
  );
}

export default function App() {
  return (
    <div className="flex h-[1080px] w-[1920px] flex-col overflow-hidden bg-[#060912] font-['Lato',sans-serif] text-black">
      <MenuBar />
      <TabStrip />
      <Toolbar />
      <EmrHeader />
      <History />
      <Dock />
    </div>
  );
}
